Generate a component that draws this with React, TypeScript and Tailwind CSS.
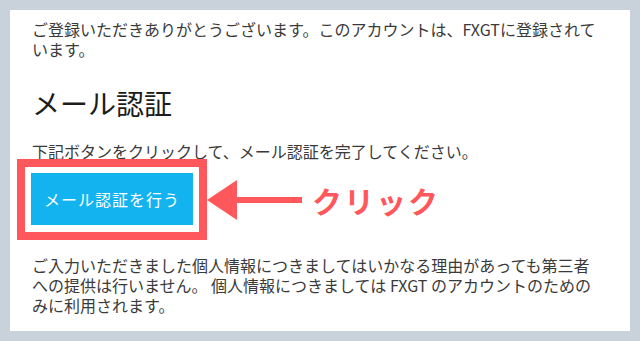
export default function App() {
  const font = { fontFamily: '"Noto Sans CJK JP", "Noto Sans", sans-serif' }
  return (
    <div className="w-[640px] h-[341px] bg-[#c9d1db] p-[10px]" style={font}>
      <div className="bg-white h-[321px] pt-[9px] pl-[22px] pr-[27px] text-[#3a3a3a]">
        <p className="text-[16px] leading-[20px]">
          ご登録いただきありがとうございます。このアカウントは、FXGTに登録されています。
        </p>

        <h2 className="mt-[26px] text-[28px] leading-[36px] text-[#1c1c1c]">メール認証</h2>

        <p className="mt-[21px] text-[16px] leading-[18px]">
          下記ボタンをクリックして、メール認証を完了してください。
        </p>

        <div className="flex items-center -ml-[15px] -mt-[1px]">
          {/* highlighted button */}
          <div className="border-[8px] border-[#ff575b] pt-[6px] pb-[7px] px-[6px] bg-white">
            <button className="w-[162px] h-[52px] bg-[#13b3ef] text-white text-[16px] tracking-[1px]">
              メール認証を行う
            </button>
          </div>
          <svg width="95" height="40" viewBox="0 0 95 40" className="shrink-0">
            <polygon points="0,20 30,0 30,40" fill="#ff575b" />
            <rect x="29" y="17" width="66" height="6" fill="#ff575b" />
          </svg>
          <span className="ml-[10px] text-[30px] font-bold text-[#ff575b] tracking-[2px] leading-none">
            クリック
          </span>
        </div>

        <p className="mt-[15px] text-[16px] leading-[20px]">
          ご入力いただきました個人情報につきましてはいかなる理由があっても第三者への提供は行いません。 個人情報につきましては FXGT のアカウントのためのみに利用されます。
        </p>
      </div>
    </div>
  )
}
